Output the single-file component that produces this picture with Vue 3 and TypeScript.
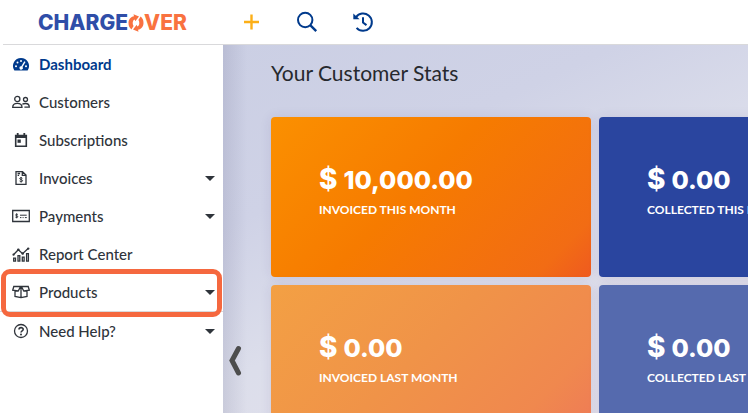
<script setup lang="ts">
import { ref } from 'vue'

interface NavItem {
  label: string
  icon: string
  expandable?: boolean
  active?: boolean
  highlighted?: boolean
}

interface Stat {
  amount: string
  caption: string
  tone: 'orange' | 'blue'
  past?: boolean
}

const navItems: NavItem[] = [
  { label: 'Dashboard', icon: 'gauge', active: true },
  { label: 'Customers', icon: 'users' },
  { label: 'Subscriptions', icon: 'calendar' },
  { label: 'Invoices', icon: 'invoice', expandable: true },
  { label: 'Payments', icon: 'check', expandable: true },
  { label: 'Report Center', icon: 'chart' },
  { label: 'Products', icon: 'box', expandable: true, highlighted: true },
  { label: 'Need Help?', icon: 'help', expandable: true },
]

const stats: Stat[] = [
  { amount: '10,000.00', caption: 'Invoiced this month', tone: 'orange' },
  { amount: '0.00', caption: 'Collected this month', tone: 'blue' },
  { amount: '0.00', caption: 'Invoiced last month', tone: 'orange', past: true },
  { amount: '0.00', caption: 'Collected last month', tone: 'blue', past: true },
]

const collapsed = ref(false)
</script>

<template>
  <div class="app">
    <header class="topbar">
      <a class="logo" href="#" aria-label="ChargeOver">
        <span class="logo-charge">CHARGE</span>
        <svg class="logo-o" viewBox="0 0 16 18" aria-hidden="true">
          <path d="M6 2.300 5.500.3 11 2.600 7.300 7.200 6.700 5.500C5.300 6 4.700 7.400 4.700 9.100c0 1.200.3 2.200.9 2.900L3.400 15.400C1.500 14 .5 11.800.5 9.100 .5 5.600 2.700 2.800 6 2.300Z" />
          <path d="M10 15.700 10.500 17.700 5 15.400 8.700 10.800 9.300 12.500C10.700 12 11.300 10.600 11.300 8.900c0-1.200-.3-2.200-.9-2.900L12.600 2.600C14.500 4 15.500 6.200 15.500 8.900 15.500 12.400 13.300 15.200 10 15.700Z" />
        </svg>
        <span class="logo-ver">VER</span>
      </a>
      <div class="tools">
        <button class="tool add" type="button" aria-label="Add">
          <svg viewBox="0 0 22 22"><path d="M11.500 3.500v15M4 11h15" stroke-width="2.400" /></svg>
        </button>
        <button class="tool" type="button" aria-label="Search">
          <svg viewBox="0 0 22 22"><circle cx="9.200" cy="9" r="7.200" stroke-width="2" /><path d="m14.200 14.200 6 6" stroke-width="2.400" /></svg>
        </button>
        <button class="tool" type="button" aria-label="Recent history">
          <svg viewBox="0 0 22 22">
            <path d="M4 6.200a8.700 8.700 0 1 1 .6 10.700" stroke-width="2" />
            <path d="M1.300 2.500v5.800h6.300Z" class="solid" />
            <path d="M11 6.200v5.300l3.500 2.600" stroke-width="2" />
          </svg>
        </button>
      </div>
    </header>

    <div class="body">
      <nav v-if="!collapsed" class="sidebar" aria-label="Main">
        <a
          v-for="item in navItems"
          :key="item.label"
          href="#"
          class="nav-item"
          :class="{ active: item.active, highlighted: item.highlighted }"
        >
          <svg class="nav-icon" viewBox="0 0 18 16" aria-hidden="true">
            <template v-if="item.icon === 'gauge'">
              <path class="solid" d="M9 2a8 8 0 0 0-6.800 12.200c.2.300.5.400.8.400h12c.3 0 .6-.1.800-.4A8 8 0 0 0 9 2Z" />
              <g class="cut"><circle cx="4" cy="10.300" r="1" /><circle cx="5.500" cy="6.600" r="1" /><circle cx="9" cy="5" r="1" /><circle cx="14" cy="10.300" r="1" /><path d="m12.300 5.200 1.200.8-3 4.900a1.700 1.700 0 1 1-1.200-.7Z" /></g>
            </template>
            <template v-else-if="item.icon === 'users'">
              <circle cx="5.300" cy="5" r="2.600" /><circle cx="13.500" cy="5.500" r="2" />
              <path d="M.7 13.400c0-2.500 1.500-4 4.600-4s4.700 1.500 4.700 4ZM10.300 10.300c.8-.5 1.800-.8 3.200-.8 2.500 0 3.800 1.200 3.800 3.600h-4.900" />
            </template>
            <template v-else-if="item.icon === 'calendar'">
              <path d="M3.700 3.500h10.600v10.800H3.700Z" stroke-width="1.600" /><path d="M3 4.500h12" stroke-width="3" /><path d="M5.700 1v3M12.300 1v3" stroke-width="1.800" /><path class="solid" d="M5.500 7.500h3.300v3.300H5.500Z" />
            </template>
            <template v-else-if="item.icon === 'invoice'">
              <path d="M4 1.700h6.500l3.500 3.400v9.200H4ZM10.300 1.800v3.500H14M5.600 3.500h2.500M5.600 5.300h1.500" />
              <path d="M10.400 8.300C9.800 7.500 7.600 7.500 7.700 8.700c.1 1.100 2.900.7 2.900 2 0 1.200-2.300 1.200-3 .3M9.100 7v5.500" stroke-width="1" />
            </template>
            <template v-else-if="item.icon === 'check'">
              <path d="M.7 2.500h16.600v11H.7Z" />
              <path d="M5.700 6.700C5 6.100 3.500 6.200 3.600 7.100c.1.900 2.200.6 2.200 1.600 0 .9-1.700 1-2.400.4M4.700 5.300v5M8 7.200h6.700M8 9.600h1.400m1.200 0h1m1.300 0h1.900" stroke-width="1" />
            </template>
            <template v-else-if="item.icon === 'chart'">
              <path d="M1.700 12.200h1.800v3H1.700ZM6 9.700h1.800v5.500H6ZM10.300 11.200h1.800v4h-1.800ZM14.600 7.700h1.800v7.500h-1.800Z" />
              <path d="m1.500 8.700 4.800-5 4.300 4 5.500-5.200" /><g class="solid"><circle cx="1.500" cy="8.700" r="1.100" /><circle cx="6.300" cy="3.700" r="1.300" /><circle cx="10.700" cy="7.500" r="1.300" /><circle cx="16.200" cy="2.600" r="1.200" /></g>
            </template>
            <template v-else-if="item.icon === 'box'">
              <path d="M1.800 2.500h14.400l1.100 3.700-5.500.8L9.600 3H8.400L6.200 7 .7 6.200ZM3 6.700v5.800L9 13.700l6-1.200V6.700M9 3v10.500" />
            </template>
            <template v-else>
              <circle cx="9" cy="8" r="6.500" />
              <path d="M7 6.500c0-2.500 4.200-2.400 4.200-.2C11.200 7.900 9 7.800 9 9.600" stroke-width="1.600" /><circle class="solid" cx="9" cy="11.600" r="1" />
            </template>
          </svg>
          <span class="nav-label">{{ item.label }}</span>
          <span v-if="item.expandable" class="caret" />
        </a>
      </nav>

      <main class="content">
        <button class="collapse" type="button" aria-label="Toggle sidebar" @click="collapsed = !collapsed">
          <svg viewBox="0 0 14 32"><path d="M10.500 3.500 4 15.500l6.500 12.500" /></svg>
        </button>
        <h1>Your Customer Stats</h1>
        <section class="stats">
          <article v-for="stat in stats" :key="stat.caption" class="card" :class="[stat.tone, { past: stat.past }]">
            <p class="amount"><span class="currency">$</span>{{ stat.amount }}</p>
            <p class="caption">{{ stat.caption }}</p>
          </article>
        </section>
      </main>
    </div>
  </div>
</template>

<style>
body {
  margin: 0;
  background: #fff;
}
</style>

<style scoped>
.app {
  display: flex;
  flex-direction: column;
  height: 100vh;
  overflow: hidden;
  font-family: Lato, 'Open Sans', sans-serif;
  color: #2f343b;
}

svg {
  display: block;
  fill: none;
  stroke: currentColor;
}

.solid {
  fill: currentColor;
  stroke: none;
}

.cut {
  fill: #fff;
  stroke: none;
}

.topbar {
  display: flex;
  align-items: center;
  flex: none;
  height: 44px;
  margin-left: 3px;
  padding-left: 35px;
  border-bottom: 1px solid #d9d9db;
}

.logo {
  display: flex;
  align-items: center;
  width: 150px;
  padding-top: 2px;
  font-family: Inter, sans-serif;
  font-size: 21px;
  font-weight: 800;
  line-height: 24px;
  text-decoration: none;
}

.logo-charge {
  color: #2f4ea8;
}

.logo-o {
  flex: none;
  width: 16px;
  height: 18px;
  fill: #f97240;
  stroke: none;
}

.logo-ver {
  color: #f97240;
}

.tools {
  display: flex;
  gap: 34px;
  margin-left: 52px;
}

.tool {
  padding: 0;
  border: 0;
  background: none;
  color: #003a8c;
  cursor: pointer;
}

.tool svg {
  width: 22px;
  height: 22px;
}

.add {
  color: #fcaf17;
}

.body {
  display: flex;
  flex: 1;
  min-height: 0;
}

.sidebar {
  flex: none;
  width: 223px;
  background: #fff;
}

.nav-item {
  position: relative;
  display: flex;
  align-items: center;
  gap: 9px;
  height: 38px;
  padding: 0 8px 0 12px;
  color: inherit;
  font-size: 15px;
  font-weight: 500;
  text-decoration: none;
}

.active {
  color: #003a8c;
  font-weight: 700;
}

.nav-icon {
  flex: none;
  width: 18px;
  height: 16px;
  stroke-width: 1.300;
}

.nav-label {
  flex: 1;
  padding-bottom: 1px;
}

.caret {
  border: 5px solid transparent;
  border-top-color: #2f343b;
  border-bottom-width: 0;
}

.highlighted {
  border-bottom: 1px solid #d9d9db;
}

.highlighted::after {
  content: '';
  position: absolute;
  inset: -4px 1px -6px 1px;
  border: 5px solid #f5683f;
  border-radius: 9px;
}

.content {
  position: relative;
  flex: 1;
  min-width: 0;
  overflow: hidden;
  padding: 16px 48px;
  background:
    linear-gradient(90deg, rgb(60 60 100 / 12%), transparent 24px),
    linear-gradient(155deg, #cbcfe4 0%, #cfd2e6 30%, #dcdeeb 55%, #e4e0ea 100%);
}

.collapse {
  position: absolute;
  top: 300px;
  left: 5px;
  padding: 0;
  border: 0;
  background: none;
  color: #4d4d4d;
  cursor: pointer;
}

.collapse svg {
  width: 14px;
  height: 32px;
  stroke-width: 5;
  stroke-linecap: round;
}

h1 {
  margin: 0 0 32px;
  color: #26292e;
  font-size: 21px;
  font-weight: 400;
  line-height: 24px;
}

.stats {
  display: grid;
  grid-template-columns: repeat(2, minmax(320px, 1fr));
  gap: 8px;
}

.card {
  box-sizing: border-box;
  min-height: 160px;
  padding: 46px 48px;
  border-radius: 4px;
  color: #fff;
  box-shadow: 0 0 12px rgb(60 40 120 / 10%);
}

.orange {
  background: linear-gradient(135deg, #fb9000 0%, #f67b00 45%, #f26c14 88%, #ef5a20 100%);
}

.blue {
  background: #2a459f;
}

.orange.past {
  background: linear-gradient(135deg, #f3a044 0%, #f09348 45%, #f0884e 80%, #ee7858 100%);
}

.blue.past {
  background: #556aae;
}

.amount {
  display: flex;
  align-items: baseline;
  gap: 6px;
  margin: 0;
  font-family: Inter, sans-serif;
  font-size: 25px;
  font-weight: 800;
  line-height: 32px;
}

.currency {
  font-size: 28px;
}

.caption {
  margin: 4px 0 0;
  font-size: 12px;
  font-weight: 700;
  line-height: 20px;
  text-transform: uppercase;
  white-space: nowrap;
}
</style>
